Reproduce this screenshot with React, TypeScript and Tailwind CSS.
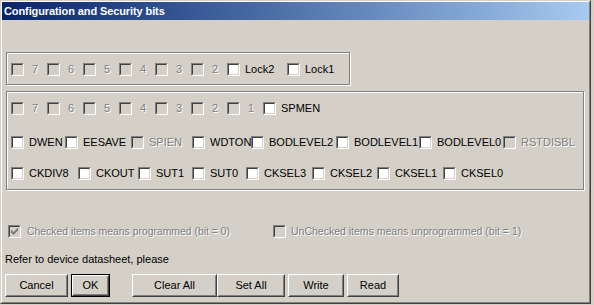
import React from "react";

function Check({ disabled, checked }: { disabled?: boolean; checked?: boolean }) {
  return (
    <span className="block w-[13px] h-[13px] shrink-0 border border-t-[#808080] border-l-[#808080] border-b-white border-r-white">
      <span
        className={
          "relative block w-[11px] h-[11px] border border-t-[#404040] border-l-[#404040] border-b-[#d4d0c8] border-r-[#d4d0c8] " +
          (disabled ? "bg-[#d4d0c8]" : "bg-white")
        }
      >
        {checked && (
          <svg width="9" height="9" viewBox="0 0 9 9" className="absolute left-0 top-0" shapeRendering="crispEdges">
            <path
              d="M1 3h1v3h-1zM2 4h1v3h-1zM3 5h1v3h-1zM4 4h1v3h-1zM5 3h1v3h-1zM6 2h1v3h-1zM7 1h1v3h-1z"
              fill={disabled ? "#808080" : "#000"}
            />
          </svg>
        )}
      </span>
    </span>
  );
}

function Item({
  w,
  label,
  disabled,
  gap = "ml-[5px]",
  clip,
}: {
  w: string;
  label: string;
  disabled?: boolean;
  gap?: string;
  clip?: boolean;
}) {
  return (
    <div className={"flex items-center shrink-0 h-[13px] " + w + (clip ? " overflow-hidden" : "")}>
      <Check disabled={disabled} />
      <span
        className={
          gap +
          " whitespace-nowrap leading-[13px] " +
          (disabled ? "text-[#808080] [text-shadow:1px_1px_0_#ffffff]" : "text-black")
        }
      >
        {label}
      </span>
    </div>
  );
}

function Btn({ w, label, def, ml }: { w: string; label: string; def?: boolean; ml: string }) {
  const inner = (
    <div className="h-full w-full border border-t-white border-l-white border-r-[#404040] border-b-[#404040]">
      <div className="h-full w-full border border-t-[#d4d0c8] border-l-[#d4d0c8] border-r-[#808080] border-b-[#808080] flex items-center justify-center text-black leading-none">
        {label}
      </div>
    </div>
  );
  if (def) {
    return <div className={"h-[23px] shrink-0 border border-black " + w + " " + ml}>{inner}</div>;
  }
  return <div className={"h-[23px] shrink-0 " + w + " " + ml}>{inner}</div>;
}

function Group({ cls, children }: { cls: string; children: React.ReactNode }) {
  return (
    <div
      className={
        "ml-[4px] border border-[#808080] shadow-[1px_1px_0_#ffffff,inset_1px_1px_0_#ffffff] " + cls
      }
    >
      {children}
    </div>
  );
}

export default function App() {
  const bits = ["7", "6", "5", "4", "3", "2"];
  return (
    <div
      className="w-[594px] h-[305px] bg-[#d4d0c8] overflow-hidden text-[11px]"
      style={{ fontFamily: '"Liberation Sans", Arial, sans-serif' }}
    >
      <div className="w-[591px] h-[304px] border border-t-[#d4d0c8] border-l-[#d4d0c8] border-r-[#404040] border-b-[#404040]">
        <div className="h-full border border-t-white border-l-white border-r-[#808080] border-b-[#808080] flex flex-col">
          <div className="h-[18px] shrink-0 bg-gradient-to-r from-[#0a246a] to-[#a6caf0] flex items-center pl-[2px]">
            <span className="text-white font-bold text-[11px] leading-none tracking-[-0.1px]">Configuration and Security bits</span>
          </div>

          <div className="flex flex-col">
            <Group cls="mt-[32px] w-[344px] h-[33px] pt-[10px] pl-[4px]">
              <div className="flex">
                {bits.map((b) => (
                  <Item key={b} w="w-[36px]" label={b} disabled gap="ml-[8px]" />
                ))}
                <Item w="w-[60px]" label="Lock2" />
                <Item w="w-[50px]" label="Lock1" />
              </div>
            </Group>

            <Group cls="mt-[6px] w-[578px] h-[99px] pt-[10px] pl-[4px]">
              <div className="flex">
                {[...bits, "1"].map((b) => (
                  <Item key={b} w="w-[36px]" label={b} disabled gap="ml-[8px]" />
                ))}
                <Item w="w-[60px]" label="SPMEN" />
              </div>
              <div className="flex mt-[21px]">
                <Item w="w-[54px]" label="DWEN" />
                <Item w="w-[66px]" label="EESAVE" />
                <Item w="w-[61px]" label="SPIEN" disabled />
                <Item w="w-[59px]" label="WDTON" clip />
                <Item w="w-[85px]" label="BODLEVEL2" />
                <Item w="w-[83px]" label="BODLEVEL1" />
                <Item w="w-[84px]" label="BODLEVEL0" />
                <Item w="w-[70px]" label="RSTDISBL" disabled />
              </div>
              <div className="flex mt-[18px]">
                <Item w="w-[67px]" label="CKDIV8" />
                <Item w="w-[60px]" label="CKOUT" />
                <Item w="w-[54px]" label="SUT1" />
                <Item w="w-[54px]" label="SUT0" />
                <Item w="w-[66px]" label="CKSEL3" />
                <Item w="w-[65px]" label="CKSEL2" />
                <Item w="w-[66px]" label="CKSEL1" />
                <Item w="w-[66px]" label="CKSEL0" />
              </div>
            </Group>

            <div className="flex mt-[35px] ml-[6px]">
              <div className="flex items-center h-[13px] w-[265px]">
                <Check disabled checked />
                <span className="ml-[6px] text-[10.4px] leading-[13px] whitespace-nowrap text-[#808080] [text-shadow:1px_1px_0_#ffffff]">
                  Checked items means programmed (bit = 0)
                </span>
              </div>
              <div className="flex items-center h-[13px]">
                <Check disabled />
                <span className="ml-[5px] text-[10.5px] leading-[13px] whitespace-nowrap text-[#808080] [text-shadow:1px_1px_0_#ffffff]">
                  UnChecked items means unprogrammed (bit = 1)
                </span>
              </div>
            </div>

            <div className="mt-[15px] ml-[3px] leading-[13px] text-black">Refer to device datasheet, please</div>

            <div className="flex mt-[8px] ml-[3px]">
              <Btn w="w-[63px]" label="Cancel" ml="ml-0" />
              <Btn w="w-[39px]" label="OK" def ml="ml-[3px]" />
              <Btn w="w-[85px]" label="Clear All" ml="ml-[22px]" />
              <Btn w="w-[68px]" label="Set All" ml="ml-0" />
              <Btn w="w-[56px]" label="Write" ml="ml-[3px]" />
              <Btn w="w-[52px]" label="Read" ml="ml-[3px]" />
            </div>
          </div>
        </div>
      </div>
    </div>
  );
}
